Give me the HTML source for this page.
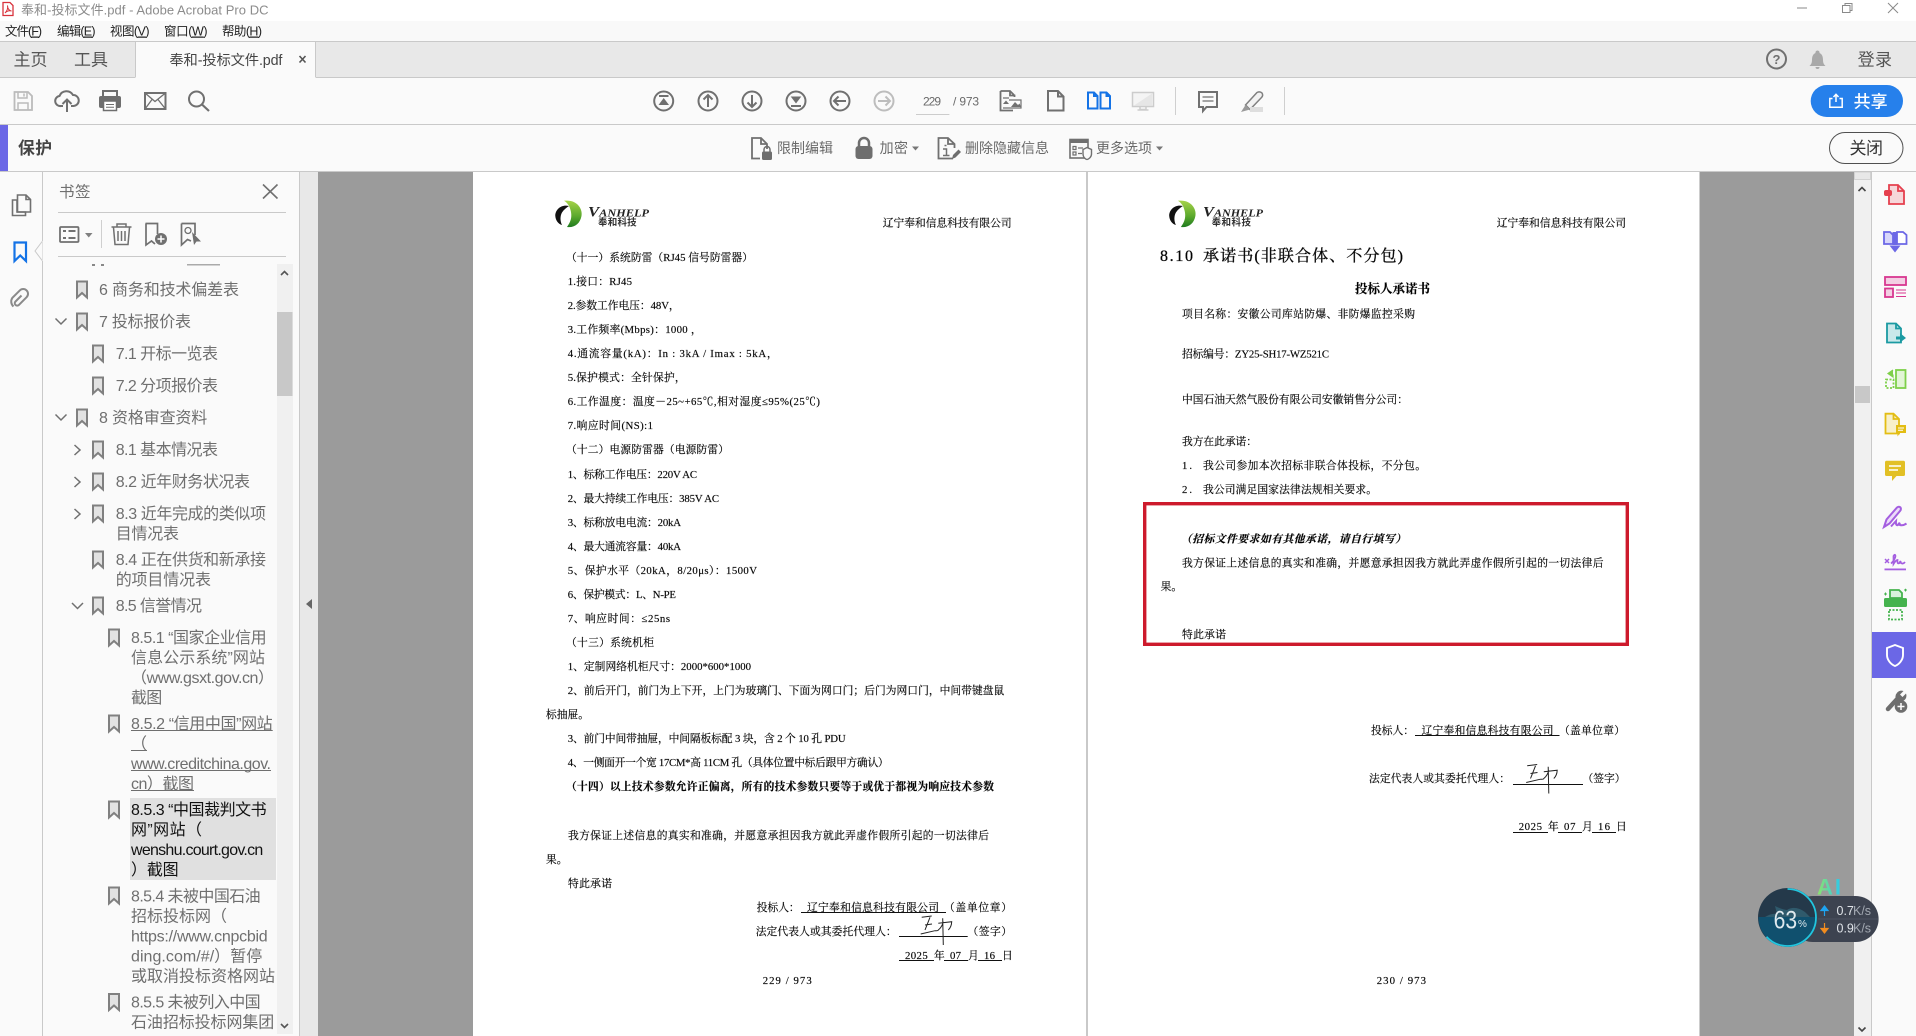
<!DOCTYPE html>
<html lang="zh-CN">
<head>
<meta charset="utf-8">
<title>奉和-投标文件.pdf - Adobe Acrobat Pro DC</title>
<style>
html,body{margin:0;padding:0;background:#fff;width:1916px;height:1036px;overflow:hidden}
svg{display:block}
.u{font-family:"Liberation Sans","Noto Sans CJK SC",sans-serif}
.p{font-family:"Liberation Serif","Noto Serif CJK SC",serif;font-size:10.75px;fill:#000;stroke:#222;stroke-width:.18}
.pb{font-weight:700}
.t{font-family:"Liberation Sans","Noto Sans CJK SC",sans-serif;font-size:16px;fill:#6f6f6f}
.i{fill:none;stroke:#707070;stroke-width:2}
.m{font-size:12.5px;fill:#222}
.tb{font-size:14px;fill:#6a6a6a}
</style>
</head>
<body>
<svg xmlns="http://www.w3.org/2000/svg" width="1916" height="1036" viewBox="0 0 1916 1036">
<defs>
<g id="bm"><path d="M1 1H11V17L6 12.5L1 17Z" fill="#e2e2e2" stroke="#808080" stroke-width="2"/></g>
<linearGradient id="lg" x1="0" y1="0" x2="0" y2="1"><stop offset="0" stop-color="#a6d24a"/><stop offset=".6" stop-color="#5aa82c"/><stop offset="1" stop-color="#1f7a1f"/></linearGradient>
<linearGradient id="ai" x1="0" y1="0" x2="1" y2="0"><stop offset="0" stop-color="#8fe36a"/><stop offset="1" stop-color="#2cc8ee"/></linearGradient>
<clipPath id="ccl"><circle cx="1787.5" cy="917.5" r="29"/></clipPath>
</defs>

<!-- title bar -->
<rect width="1916" height="21" fill="#fff"/>
<path d="M3 2.5H10L13 5.5V15.5H3Z" fill="#fff" stroke="#d8323c" stroke-width="1.3"/>
<path d="M5 13C7 11 8 8 7.5 5.5C7.5 8 9 11 11.5 11C9.5 10.5 7 11 5 13Z" fill="none" stroke="#d8323c"/>
<text class="u" x="21" y="14.5" font-size="13" fill="#8c8c8c" textLength="247.5">奉和-投标文件.pdf - Adobe Acrobat Pro DC</text>
<path d="M1797 8H1807" stroke="#8a8a8a" stroke-width="1"/>
<path d="M1845 5.5V3.5H1852V10.5H1850M1842.5 5.5H1850V12.5H1842.5Z" fill="none" stroke="#8a8a8a"/>
<path d="M1888 3L1898 13M1898 3L1888 13" stroke="#8a8a8a"/>

<!-- menu -->
<rect y="21" width="1916" height="20" fill="#f9f9f9"/>
<rect y="41" width="1916" height="1" fill="#c9c9c9"/>
<g class="u m">
<text x="5" y="35.5" textLength="37">文件(<tspan text-decoration="underline">F</tspan>)</text>
<text x="57" y="35.5" textLength="38.5">编辑(<tspan text-decoration="underline">E</tspan>)</text>
<text x="110" y="35.5" textLength="39.5">视图(<tspan text-decoration="underline">V</tspan>)</text>
<text x="164" y="35.5" textLength="43.5">窗口(<tspan text-decoration="underline">W</tspan>)</text>
<text x="222" y="35.5" textLength="40">帮助(<tspan text-decoration="underline">H</tspan>)</text>
</g>

<!-- tab bar -->
<rect y="42" width="1916" height="36" fill="#e8e8e8"/>
<rect y="77" width="1916" height="1" fill="#c9c9c9"/>
<rect x="135.5" y="42" width="180" height="36" fill="#fafafa"/>
<path d="M135.5 42V77M315.5 42V77" stroke="#c9c9c9"/>
<text class="u" x="13.5" y="65.5" font-size="17" fill="#555" textLength="34">主页</text>
<text class="u" x="74" y="65.5" font-size="17" fill="#555" textLength="34">工具</text>
<text class="u" x="169.4" y="65" font-size="14.3" fill="#444" textLength="113">奉和-投标文件.pdf</text>
<path d="M299.5 56L305.5 62.5M305.5 56L299.5 62.5" stroke="#555" stroke-width="1.6"/>
<circle cx="1776.5" cy="59" r="9.5" fill="none" stroke="#707070" stroke-width="2"/>
<text class="u" x="1776.5" y="64" font-size="13" font-weight="700" fill="#707070" text-anchor="middle">?</text>
<path d="M1817.5 50.5A2 2 0 0 1 1819.5 53C1822 54 1823 56.5 1823 60C1823 63 1824 64.5 1825.5 66H1809.5C1811 64.5 1812 63 1812 60C1812 56.5 1813 54 1815.5 53A2 2 0 0 1 1817.5 50.5ZM1815.5 67H1819.5A2 2 0 0 1 1815.5 67Z" fill="#a9a9a9"/>
<text class="u" x="1857.6" y="65.5" font-size="17" fill="#555" textLength="34.4">登录</text>

<!-- toolbar -->
<rect y="78" width="1916" height="46" fill="#fafafa"/>
<rect y="124" width="1916" height="1" fill="#c9c9c9"/>
<path d="M14.5 92H28L32 96V110H14.5Z" fill="none" stroke="#bbb" stroke-width="1.8"/>
<path d="M18 92V98H27V92M24 93.5V96.5M18 110V103H28V110" fill="none" stroke="#bbb" stroke-width="1.5"/>
<path d="M63 106H61A5 5 0 0 1 59.5 96A7.5 7.5 0 0 1 73 95A5.5 5.5 0 0 1 73.5 106H71" fill="none" stroke="#707070" stroke-width="2"/>
<path d="M67 112V100M62.5 104L67 99.5L71.5 104" fill="none" stroke="#707070" stroke-width="2"/>
<path d="M103 96V91H117V96" fill="none" stroke="#6e6e6e" stroke-width="2"/>
<rect x="99" y="96" width="22" height="12" rx="2" fill="#6e6e6e"/>
<rect x="103.5" y="101" width="13" height="9.5" fill="#fff" stroke="#6e6e6e" stroke-width="1.5"/>
<path d="M106 104.5H114M106 107.3H114" stroke="#6e6e6e"/>
<rect x="145" y="93" width="20.5" height="16" fill="none" stroke="#707070" stroke-width="2"/>
<path d="M145 93L155 101.5L165.5 93M145 109L152 99.5M165.5 109L158 99.5" fill="none" stroke="#707070" stroke-width="1.3"/>
<circle cx="196.5" cy="99" r="7.5" fill="none" stroke="#707070" stroke-width="2"/>
<path d="M202 104.5L209 111" stroke="#707070" stroke-width="2.2"/>

<!-- nav circles -->
<g class="i">
<circle cx="663.7" cy="101" r="9.5"/><circle cx="708" cy="101" r="9.5"/><circle cx="752" cy="101" r="9.5"/><circle cx="796" cy="101" r="9.5"/><circle cx="840" cy="101" r="9.5"/>
<circle cx="884" cy="101" r="9.5" stroke="#bdbdbd"/>
<path d="M659 96H668.5"/>
<path d="M708 107V95M703.5 99.5L708 95L712.5 99.5"/>
<path d="M752 95V107M747.5 102.5L752 107L756.5 102.5"/>
<path d="M791 106H801"/>
<path d="M846 101H834M838.5 96.5L834 101L838.5 105.5"/>
<path d="M878 101H890M885.5 96.5L890 101L885.5 105.5" stroke="#bdbdbd"/>
</g>
<path d="M663.7 98L669 105H658.5Z" fill="#707070"/>
<path d="M790.7 96.5H801.3L796 103.5Z" fill="#707070"/>
<text class="u" x="923" y="105.5" font-size="12" fill="#6a6a6a" textLength="18">229</text>
<rect x="916" y="114" width="33.4" height="1" fill="#ccc"/>
<text class="u" x="953" y="105.5" font-size="12" fill="#6a6a6a" textLength="26">/ 973</text>
<path d="M1000.5 91H1010L1014 95M1010 91V95.5H1014.5V97M1000.5 91V110.5H1013" fill="none" stroke="#707070" stroke-width="1.8"/>
<path d="M1003 98H1009M1003 108H1021V100H1009" fill="none" stroke="#707070" stroke-width="1.2"/>
<path d="M1011 107L1015 102L1018 105L1019.5 103.5L1021 107ZM1003 104L1006 100.5L1009 104Z" fill="#707070"/>
<path d="M1048 91H1058L1063.5 96.5V110.5H1048ZM1058 91V96.5H1063.5" class="i"/>
<path d="M1088 92.5H1094L1097.5 96V108.5H1088ZM1094 92.5V96H1097.5M1100.5 92.5H1106.5L1110 96V108.5H1100.5ZM1106.5 92.5V96H1110" fill="none" stroke="#1473e6" stroke-width="2"/>
<rect x="1132.5" y="92.5" width="21" height="14" fill="#f4f4f4" stroke="#ccc" stroke-width="1.5"/>
<path d="M1134 105.5L1152 93.5V105.5Z" fill="#e6e6e6"/>
<path d="M1140 107V109.5H1146V107M1137.5 110H1148.5" fill="none" stroke="#ccc" stroke-width="1.5"/>
<rect x="1175" y="87" width="1" height="28" fill="#cfcfcf"/>
<path d="M1199 92H1217V107H1206.5L1203 111V107H1199Z" class="i"/>
<path d="M1202.5 97H1213.5M1202.5 101H1213.5" stroke="#707070" stroke-width="1.3"/>
<path d="M1245.5 105L1257 92.5Q1260 91 1262 93Q1263.5 95.5 1261.5 97.5L1250 109.5Z" fill="#f2f2f2" stroke="#808080" stroke-width="1.5"/>
<path d="M1241 112L1245.5 105L1250 109.5Z" fill="#9a9a9a"/>
<rect x="1250" y="107" width="13" height="5" fill="#dedede"/>
<rect x="1284" y="87" width="1" height="28" fill="#cfcfcf"/>
<rect x="1810.7" y="85" width="92.3" height="32" rx="16" fill="#2680eb"/>
<path d="M1832.5 98.5H1829.8V107.3H1842.2V98.5H1839.5M1836 102V94.5M1833.5 97L1836 94.3L1838.5 97" fill="none" stroke="#fff" stroke-width="1.5"/>
<text class="u" x="1853.6" y="107.5" font-size="17" font-weight="500" fill="#fff" textLength="34">共享</text>

<!-- protect bar -->
<rect y="125" width="1916" height="46.5" fill="#fafafa"/>
<rect y="171" width="1916" height="1" fill="#c9c9c9"/>
<rect y="125" width="8" height="46" fill="#6b67e6"/>
<text class="u" x="18" y="154" font-size="16.8" font-weight="700" fill="#444" textLength="34">保护</text>

<path d="M760 158.5H752V138H761L767 144V149M761 138V144H767" fill="none" stroke="#707070" stroke-width="1.8"/>
<rect x="762" y="151.5" width="10" height="8.5" rx="1.5" fill="#6e6e6e"/>
<path d="M764 152V149.5A3 3 0 0 1 770 149.5V152" fill="none" stroke="#6e6e6e" stroke-width="1.5"/>
<text class="u tb" x="777" y="153" textLength="56">限制编辑</text>
<rect x="855.5" y="146" width="17" height="13" rx="3" fill="#6e6e6e"/>
<path d="M859 147V143A5 5 0 0 1 869 143V147" fill="none" stroke="#6e6e6e" stroke-width="2.5"/>
<text class="u tb" x="879.6" y="153" textLength="28.4">加密</text>
<path d="M912 146.5H919L915.5 150.5Z" fill="#777"/>
<path d="M953 158.5H938.5V138H948L954.5 144V148M948 138V144H954.5" fill="none" stroke="#707070" stroke-width="1.8"/>
<path d="M944.5 145.5H946.5M943 149H946.5V155M943 155.5H949.5" fill="none" stroke="#707070" stroke-width="1.5"/>
<path d="M952 159L953 155L958.5 149.5L961 152L955.5 157.5Z" fill="#6e6e6e"/>
<text class="u tb" x="965" y="153" textLength="84">删除隐藏信息</text>
<rect x="1070" y="139.5" width="18" height="18.5" fill="none" stroke="#707070" stroke-width="1.6"/>
<rect x="1070" y="139.5" width="18" height="3.5" fill="#707070"/>
<path d="M1073 146.5H1076V149.5H1073ZM1073 152H1076V155H1073ZM1078 148H1083M1078 153.5H1082" fill="none" stroke="#707070" stroke-width="1.2"/>
<path d="M1087 147.5L1091.5 149.5V154C1091.5 157 1089 159 1087 159.5C1085 159 1083 157 1083 154V149.5Z" fill="#fafafa" stroke="#707070" stroke-width="1.4"/>
<text class="u tb" x="1096" y="153" textLength="56">更多选项</text>
<path d="M1156 146.5H1163L1159.5 150.5Z" fill="#777"/>
<rect x="1829.5" y="132.5" width="73.5" height="31" rx="15.5" fill="#fafafa" stroke="#505050" stroke-width="1"/>
<text class="u" x="1849.5" y="154" font-size="17" fill="#333" textLength="33.5">关闭</text>

<!-- left rail + panel -->
<rect y="172" width="300" height="864" fill="#fafafa"/>
<rect x="42" y="172" width="1" height="864" fill="#c9c9c9"/>
<path d="M42.5 241L35 251L42.5 261Z" fill="#fafafa" stroke="#c9c9c9"/>
<rect x="42.5" y="241" width="2" height="20" fill="#fafafa"/>
<path d="M12.5 200H17V212H25.5V215.5H12.5Z" fill="none" stroke="#707070" stroke-width="1.6"/>
<path d="M17.5 195H26L30.5 199.5V212H17.5ZM26 195V199.5H30.5" fill="none" stroke="#707070" stroke-width="1.6"/>
<path d="M14.5 242.5H26V261L20.25 255.5L14.5 261Z" fill="none" stroke="#1473e6" stroke-width="2.2"/>
<path d="M21.5 295.5L15.5 301.5A2.4 2.4 0 0 0 18.9 304.9L26.6 297.2A4.8 4.8 0 0 0 19.8 290.4L12.3 297.9A6.6 6.6 0 0 0 13.5 306.5" fill="none" stroke="#8a8a8a" stroke-width="2"/>
<text class="u" x="59" y="197" font-size="15.5" fill="#707070" textLength="31.5">书签</text>
<path d="M263 184.5L277.5 198.5M277.5 184.5L263 198.5" stroke="#707070" stroke-width="1.6"/>
<rect x="58" y="212" width="228" height="1" fill="#c9c9c9"/>
<rect x="58" y="256" width="228" height="1" fill="#c9c9c9"/>
<rect x="60" y="227" width="18.5" height="15" rx="1" fill="none" stroke="#707070" stroke-width="1.8"/>
<path d="M63 231H66M63 238H66M68.5 231H75.5M68.5 238H75.5" stroke="#707070" stroke-width="2"/>
<path d="M85 233H92.5L88.75 237.5Z" fill="#808080"/>
<rect x="101" y="220" width="1" height="28" fill="#cfcfcf"/>
<path d="M111.5 227H131.5M117 227V224H126V227M113.5 227.5L115 244.5H128L129.5 227.5M118 231V241M121.5 231V241M125 231V241" fill="none" stroke="#707070" stroke-width="1.5"/>
<path d="M145.5 223.5H157.5V234M155 244L151.5 241L146 245V223.5" fill="none" stroke="#707070" stroke-width="1.7"/>
<circle cx="161" cy="239" r="6" fill="#707070"/><path d="M157.5 239H164.5M161 235.5V242.5" stroke="#fff" stroke-width="1.5"/>
<path d="M181.5 223.5H195V235M191 241L187.5 239.5L181.5 245V223.5" fill="none" stroke="#707070" stroke-width="1.7"/>
<circle cx="188" cy="230.5" r="3" fill="none" stroke="#707070" stroke-width="1.3"/>
<path d="M192 232L201 241.5L196.5 241.5L194 245Z" fill="#707070"/>

<!-- bookmark scrollbar + strip -->
<rect x="277" y="264" width="16" height="770" fill="#f0f0f0"/>
<rect x="277" y="312" width="15.5" height="84" fill="#c8c8c8"/>
<path d="M281 275L284.5 271.5L288 275" fill="none" stroke="#555" stroke-width="1.6"/>
<path d="M281 1024L284.5 1027.5L288 1024" fill="none" stroke="#555" stroke-width="1.6"/>
<rect x="299" y="172" width="1" height="864" fill="#c9c9c9"/>
<rect x="300" y="172" width="18" height="864" fill="#e8e8e8"/>
<path d="M312 599V609L306 604Z" fill="#666"/>

<!-- bookmarks -->
<rect x="92" y="264" width="3" height="2" fill="#888"/><rect x="101" y="264" width="3" height="2" fill="#888"/>
<rect x="187" y="264" width="33" height="1.5" fill="#aaa"/>
<use href="#bm" x="76" y="280.5"/><text class="t" x="99" y="295" textLength="140">6 商务和技术偏差表</text>
<use href="#bm" x="76" y="312.5"/><text class="t" x="99" y="327" textLength="92">7 投标报价表</text>
<use href="#bm" x="92" y="344.5"/><text class="t" x="115.7" y="359" textLength="102.3">7.1 开标一览表</text>
<use href="#bm" x="92" y="376.5"/><text class="t" x="115.7" y="391" textLength="102.3">7.2 分项报价表</text>
<use href="#bm" x="76" y="408.5"/><text class="t" x="99" y="423" textLength="108.3">8 资格审查资料</text>
<use href="#bm" x="92" y="440.5"/><text class="t" x="115.7" y="455" textLength="102.3">8.1 基本情况表</text>
<use href="#bm" x="92" y="472.5"/><text class="t" x="115.7" y="487" textLength="134.3">8.2 近年财务状况表</text>
<use href="#bm" x="92" y="504.5"/><text class="t" x="115.7" y="519" textLength="150.3">8.3 近年完成的类似项</text><text class="t" x="115.7" y="539" textLength="63.3">目情况表</text>
<use href="#bm" x="92" y="550.5"/><text class="t" x="115.7" y="565" textLength="150.3">8.4 正在供货和新承接</text><text class="t" x="115.7" y="585" textLength="95.3">的项目情况表</text>
<use href="#bm" x="92" y="596.5"/><text class="t" x="115.7" y="611" textLength="86.3">8.5 信誉情况</text>
<use href="#bm" x="108" y="628.5"/><text class="t" x="131" y="643" textLength="135.7">8.5.1 “国家企业信用</text>
<text class="t" x="131" y="663" textLength="134">信息公示系统”网站</text>
<text class="t" x="131" y="683" textLength="143">（www.gsxt.gov.cn）</text>
<text class="t" x="131" y="703" textLength="31.3">截图</text>
<use href="#bm" x="108" y="714.5"/><text class="t" x="131" y="729" textLength="141.7">8.5.2 “信用中国”网站</text>
<text class="t" x="131" y="749">（</text>
<text class="t" x="131" y="769" textLength="140">www.creditchina.gov.</text>
<text class="t" x="131" y="789" textLength="63">cn）截图</text>
<rect x="131" y="730" width="141.7" height="1" fill="#6f6f6f"/><rect x="131" y="750" width="16" height="1" fill="#6f6f6f"/><rect x="131" y="770" width="140" height="1" fill="#6f6f6f"/><rect x="131" y="790" width="63" height="1" fill="#6f6f6f"/>
<rect x="130" y="798" width="146" height="82" fill="#e0e0e0"/>
<use href="#bm" x="108" y="800.5"/><text class="t" style="fill:#111" x="131" y="815" textLength="135.7">8.5.3 “中国裁判文书</text>
<text class="t" style="fill:#111" x="131" y="835" textLength="71">网”网站（</text>
<text class="t" style="fill:#111" x="131" y="855" textLength="132.3">wenshu.court.gov.cn</text>
<text class="t" style="fill:#111" x="131" y="875" textLength="47.7">）截图</text>
<use href="#bm" x="108" y="886.5"/><text class="t" x="131" y="901.5" textLength="129.7">8.5.4 未被中国石油</text>
<text class="t" x="131" y="921.5" textLength="96">招标投标网（</text>
<text class="t" x="131" y="941.5" textLength="136.7">https://www.cnpcbid</text>
<text class="t" x="131" y="961.5" textLength="131.3">ding.com/#/）暂停</text>
<text class="t" x="131" y="981.5" textLength="144">或取消投标资格网站</text>
<use href="#bm" x="108" y="993"/><text class="t" x="131" y="1007.5" textLength="129.7">8.5.5 未被列入中国</text>
<text class="t" x="131" y="1027.5" textLength="143.3">石油招标投标网集团</text>
<g fill="none" stroke="#707070" stroke-width="1.5">
<path d="M55.5 318.5L61 324L66.5 318.5M55.5 414.5L61 420L66.5 414.5M72 603L77.5 608.5L83 603"/>
<path d="M74.5 445L80 450L74.5 455M74.5 477L80 482L74.5 487M74.5 509L80 514L74.5 519"/>
</g>

<!-- document area -->
<rect x="318" y="172" width="1536" height="864" fill="#9b9b9b"/>
<rect x="473" y="172" width="613" height="864" fill="#fff"/>
<rect x="1086" y="172" width="2" height="864" fill="#c9c9c9"/>
<rect x="1088" y="172" width="611.5" height="864" fill="#fff"/>

<!-- doc scrollbar -->
<rect x="1854" y="172" width="17" height="864" fill="#f0f0f0"/>
<rect x="1854.5" y="172" width="16" height="7.5" fill="#e8e8e8" stroke="#c0c0c0" stroke-width=".6"/>
<rect x="1855" y="386" width="15" height="17" fill="#c8c8c8"/>
<path d="M1858.5 191L1862 187.5L1865.5 191M1858.5 1027.5L1862 1031L1865.5 1027.5" fill="none" stroke="#444" stroke-width="1.6"/>
<rect x="1871" y="172" width="1" height="864" fill="#c9c9c9"/>
<rect x="1872" y="172" width="44" height="864" fill="#fafafa"/>

<!-- LEFT PAGE -->
<path d="M564 200.8C576 199 583 208 581.5 216C580 224 574 228 567 227C570.5 222 572 218 571 212C570 207 568 203 564 200.8Z" fill="url(#lg)"/>
<path d="M569 206C561 204 555 210 555.3 216C555.6 220 558 224 562 225C560 221 560 216 562 212.5C564 209.5 566.5 207.5 569 206Z" fill="#111"/>
<text x="588" y="216.5" font-family="Liberation Serif,serif" font-weight="700" font-style="italic" fill="#222" font-size="11" textLength="61" lengthAdjust="spacingAndGlyphs"><tspan font-size="15">V</tspan>ANHELP</text>
<text x="598" y="225.5" font-family="Liberation Sans,Noto Sans CJK SC,sans-serif" font-size="9.5" font-weight="700" fill="#333" textLength="38.7">奉和科技</text>
<g class="p">
<text x="882.7" y="226.7" textLength="129">辽宁奉和信息科技有限公司</text>
<text x="566" y="261" textLength="187">（十一）系统防雷（RJ45 信号防雷器）</text>
<text x="567.7" y="285" textLength="64.3">1.接口：RJ45</text>
<text x="567.7" y="309" textLength="112">2.参数工作电压：48V，</text>
<text x="567.7" y="333" textLength="134">3.工作频率(Mbps)：1000 ，</text>
<text x="567.7" y="357" textLength="210">4.通流容量(kA)：In : 3kA / Imax : 5kA，</text>
<text x="567.7" y="381" textLength="118">5.保护模式：全针保护，</text>
<text x="567.7" y="405" textLength="252.3">6.工作温度：温度－25~+65℃,相对湿度≤95%(25℃)</text>
<text x="567.7" y="429" textLength="85.3">7.响应时间(NS):1</text>
<text x="566" y="453" textLength="163">（十二）电源防雷器（电源防雷）</text>
<text x="567.7" y="478" textLength="129.3">1、标称工作电压：220V AC</text>
<text x="567.7" y="502" textLength="151.3">2、最大持续工作电压：385V AC</text>
<text x="567.7" y="526" textLength="113.3">3、标称放电电流：20kA</text>
<text x="567.7" y="550" textLength="113.3">4、最大通流容量：40kA</text>
<text x="567.7" y="574" textLength="189.3">5、保护水平（20kA，8/20μs）：1500V</text>
<text x="567.7" y="598" textLength="108.3">6、保护模式：L、N-PE</text>
<text x="567.7" y="622" textLength="102.3">7、响应时间：≤25ns</text>
<text x="566" y="646" textLength="88">（十三）系统机柜</text>
<text x="567.7" y="670" textLength="183.3">1、定制网络机柜尺寸：2000*600*1000</text>
<text x="567.7" y="694" textLength="436.6">2、前后开门，前门为上下开，上门为玻璃门、下面为网口门；后门为网口门，中间带键盘鼠</text>
<text x="546" y="718" textLength="43">标抽屉。</text>
<text x="567.7" y="742" textLength="278">3、前门中间带抽屉，中间隔板标配 3 块，含 2 个 10 孔 PDU</text>
<text x="567.7" y="766" textLength="321">4、一侧面开一个宽 17CM*高 11CM 孔（具体位置中标后跟甲方确认）</text>
<text class="pb" x="566" y="790" textLength="428">（十四）以上技术参数允许正偏离，所有的技术参数只要等于或优于都视为响应技术参数</text>
<text x="568" y="839" textLength="421">我方保证上述信息的真实和准确，并愿意承担因我方就此弄虚作假所引起的一切法律后</text>
<text x="546" y="863" textLength="21.5">果。</text>
<text x="568" y="887" textLength="44">特此承诺</text>
<text x="756.7" y="911" textLength="43">投标人：</text>
<text x="807" y="911" textLength="132">辽宁奉和信息科技有限公司</text>
<text x="944" y="911" textLength="68">（盖单位章）</text>
<text x="755.7" y="935" textLength="141">法定代表人或其委托代理人：</text>
<text x="967.5" y="935" textLength="44.5">（签字）</text>
<text x="905" y="959" textLength="22.7">2025</text>
<text x="934" y="959" textLength="10.7">年</text>
<text x="950" y="959" textLength="11">07</text>
<text x="968" y="959" textLength="10.7">月</text>
<text x="984" y="959" textLength="11">16</text>
<text x="1002" y="959" textLength="10.7">日</text>
<text x="762.7" y="984" textLength="49">229 / 973</text>
</g>
<path d="M801 912.500H946M899 936.500H967.700M899 960.500H934M944 960.500H968M978 960.500H1002" stroke="#111" stroke-width="1"/>
<g fill="none" stroke="#222" stroke-width="1">
<path d="M921.7 917.3L931.7 916M930 917.3Q927 925 925 930M920.7 934L935 930.7M925 925L932 924"/>
<path d="M935 930.7Q938 931 938.3 930Q942 927 943.3 921.7M942.7 918.3L943.3 945M938.3 923.3L951.7 921.7Q951.5 927 948.3 930"/>
</g>

<!-- RIGHT PAGE -->
<g transform="translate(613.9 0)">
<path d="M564 200.8C576 199 583 208 581.5 216C580 224 574 228 567 227C570.5 222 572 218 571 212C570 207 568 203 564 200.8Z" fill="url(#lg)"/>
<path d="M569 206C561 204 555 210 555.3 216C555.6 220 558 224 562 225C560 221 560 216 562 212.5C564 209.5 566.5 207.5 569 206Z" fill="#111"/>
</g>
<text x="1203" y="216.5" font-family="Liberation Serif,serif" font-weight="700" font-style="italic" fill="#222" font-size="11" textLength="60" lengthAdjust="spacingAndGlyphs"><tspan font-size="15">V</tspan>ANHELP</text>
<text x="1211.6" y="225.5" font-family="Liberation Sans,Noto Sans CJK SC,sans-serif" font-size="9.5" font-weight="700" fill="#333" textLength="39.4">奉和科技</text>
<g class="p">
<text x="1496.7" y="226.7" textLength="129.3">辽宁奉和信息科技有限公司</text>
<text x="1160" y="261" style="font-size:16px;stroke-width:.35" textLength="33">8.10</text>
<text x="1203" y="261" style="font-size:16px;stroke-width:.35" textLength="200">承诺书(非联合体、不分包)</text>
<text class="pb" x="1355" y="293" style="font-size:12.5px" textLength="75">投标人承诺书</text>
<text x="1182" y="317.3" textLength="233">项目名称：安徽公司库站防爆、非防爆监控采购</text>
<text x="1182" y="357.3" textLength="147">招标编号：ZY25-SH17-WZ521C</text>
<text x="1182" y="403" textLength="226">中国石油天然气股份有限公司安徽销售分公司：</text>
<text x="1182" y="445" textLength="75">我方在此承诺：</text>
<text x="1182" y="469" textLength="10">1.</text>
<text x="1203" y="469" textLength="223">我公司参加本次招标非联合体投标，不分包。</text>
<text x="1182" y="493" textLength="10">2.</text>
<text x="1203" y="493" textLength="174">我公司满足国家法律法规相关要求。</text>
<text class="pb" x="1181" y="542.3" font-style="italic" textLength="225">（招标文件要求如有其他承诺，请自行填写）</text>
<text x="1182" y="566.3" textLength="421.5">我方保证上述信息的真实和准确，并愿意承担因我方就此弄虚作假所引起的一切法律后</text>
<text x="1160.6" y="590" textLength="21.5">果。</text>
<text x="1182" y="638" textLength="44">特此承诺</text>
<text x="1371" y="734" textLength="43">投标人：</text>
<text x="1421.5" y="734" textLength="132">辽宁奉和信息科技有限公司</text>
<text x="1559" y="734" textLength="66">（盖单位章）</text>
<text x="1369" y="782" textLength="141">法定代表人或其委托代理人：</text>
<text x="1582.5" y="782" textLength="43">（签字）</text>
<text x="1518.7" y="830" textLength="23.3">2025</text>
<text x="1548" y="830" textLength="10.7">年</text>
<text x="1564" y="830" textLength="11.5">07</text>
<text x="1582" y="830" textLength="10.7">月</text>
<text x="1598" y="830" textLength="12">16</text>
<text x="1616" y="830" textLength="10.7">日</text>
<text x="1376.7" y="984" textLength="49.3">230 / 973</text>
</g>
<path d="M1415 735.500H1559.500M1513 784.500H1583M1513 832.500H1548M1558 832.500H1582M1592 832.500H1616" stroke="#111" stroke-width="1"/>
<g fill="none" stroke="#222" stroke-width="1" transform="translate(605.5 -151.5)">
<path d="M921.7 917.3L931.7 916M930 917.3Q927 925 925 930M920.7 934L935 930.7M925 925L932 924"/>
<path d="M935 930.7Q938 931 938.3 930Q942 927 943.3 921.7M942.7 918.3L943.3 945M938.3 923.3L951.7 921.7Q951.5 927 948.3 930"/>
</g>
<rect x="1144.7" y="503.7" width="482.6" height="140.6" fill="none" stroke="#cd1a2c" stroke-width="3.4"/>

<!-- right rail icons -->
<g transform="translate(0 1)">
<path d="M1889 184H1898L1904 190V203H1889Z" fill="#f6d6d9" stroke="#e5404e" stroke-width="1.8"/>
<path d="M1898 184V190H1904" fill="none" stroke="#e5404e" stroke-width="1.8"/>
<rect x="1884" y="189" width="8" height="6" rx="2" fill="#e5404e"/>
</g>
<g transform="translate(0 4)">
<path d="M1884 228H1890L1893 231V240H1884Z" fill="#d7d6fa" stroke="#6b67e6" stroke-width="1.8"/>
<path d="M1897 228H1903L1906.500 231V240H1897Z" fill="#fff" stroke="#6b67e6" stroke-width="1.8"/>
<path d="M1892.500 228V242H1897.500V228ZM1889.500 241.500H1900.500L1895 248.500Z" fill="#6b67e6"/>
</g>
<g transform="translate(0 7)">
<rect x="1885" y="270" width="21" height="8" fill="#f3cfe3" stroke="#d83790" stroke-width="1.8"/>
<rect x="1885" y="281.500" width="8" height="8.500" fill="#f3cfe3" stroke="#d83790" stroke-width="1.800"/>
<path d="M1896 283H1906M1896 286H1906M1896 289.500H1906" stroke="#d83790"/>
</g>
<g transform="translate(0 10)">
<path d="M1887 313.500H1896L1901 318.500V332.500H1887Z" fill="#c9e8ea" stroke="#1b9aa2" stroke-width="1.800"/>
<path d="M1896 313.500V318.500H1901" fill="none" stroke="#1b9aa2" stroke-width="1.800"/>
<path d="M1896 326.500H1900V323L1906 328L1900 332.500V329.500H1896Z" fill="#1b9aa2"/>
</g>
<g transform="translate(0 13)">
<rect x="1896" y="357" width="9.500" height="18" fill="#e2f5d6" stroke="#7ed04a" stroke-width="1.800"/>
<rect x="1886" y="366.500" width="7.500" height="8.500" fill="none" stroke="#7ed04a" stroke-width="1.800" stroke-dasharray="2 1.500"/>
<path d="M1893 357L1888 360.500L1893 364V361.500M1888 360.500H1893" fill="#7ed04a" stroke="#7ed04a" stroke-width="1.200"/>
</g>
<g transform="translate(0 16)">
<path d="M1885.500 397.700H1893.500L1899 403V417.500H1885.500Z" fill="#f8f0c8" stroke="#e3bd13" stroke-width="1.800"/>
<path d="M1893.500 397.700V403H1899" fill="none" stroke="#e3bd13" stroke-width="1.800"/>
<path d="M1896 409H1906V417H1900L1897.500 420.500V417H1896Z" fill="#e3bd13"/>
<path d="M1898 412H1904M1898 414.300H1903" stroke="#fff"/>
</g>
<g transform="translate(0 19)">
<path d="M1886.500 441.700H1903.500Q1905 441.700 1905 443.500V455.500Q1905 457 1903.500 457H1896.500L1892 462V457H1886.500Q1885 457 1885 455.500V443.500Q1885 441.700 1886.500 441.700Z" fill="#e2c025"/>
<path d="M1889 447H1901M1889 451H1898" stroke="#fff" stroke-width="1.500"/>
</g>
<g transform="translate(0 22)">
<path d="M1884 505L1886.500 497.500L1897 485.500Q1899 484 1900.500 485.500Q1901.500 487.500 1900 489L1889.500 501.500Z" fill="#ecdcfa" stroke="#a45ee0" stroke-width="2"/>
<path d="M1891 504.500L1896 499Q1895.500 504 1898 503Q1899.500 499.500 1900 503Q1903 504 1906.500 501.500" fill="none" stroke="#a45ee0" stroke-width="2"/>
</g>
<g transform="translate(0 26)">
<path d="M1885 533L1889 537M1889 533L1885 537" stroke="#a45ee0" stroke-width="1.500"/>
<path d="M1891 537.500Q1895 534 1895.500 530Q1895 527.500 1893.500 530L1893.500 538Q1896 534 1897.500 534Q1897 538.500 1899.500 537Q1900.500 534 1901 537Q1903 538.500 1905 536" fill="none" stroke="#a45ee0" stroke-width="1.700"/>
<rect x="1884.500" y="542.500" width="21.500" height="1.800" fill="#a45ee0"/>
</g>
<g transform="translate(0 28)">
<path d="M1890 570V562H1899L1902 565V570Z" fill="#d9f1dc" stroke="#45b34e" stroke-width="1.800"/>
<rect x="1884" y="570" width="23" height="9" rx="1.500" fill="#45b34e"/>
<path d="M1889 582H1902V591.500H1889Z" fill="none" stroke="#45b34e" stroke-width="1.800" stroke-dasharray="2 1.500"/>
<path d="M1884 566H1887M1885.500 564.500V567.500M1904 562H1907M1905.500 560.700V563.500" stroke="#45b34e"/>
</g>
<rect x="1872" y="632" width="44" height="46" fill="#6b67e6"/>
<path d="M1895 645L1903 648V655C1903 660 1899 664.500 1895 666C1891 664.500 1887 660 1887 655V648Z" fill="none" stroke="#fff" stroke-width="1.900"/>
<g transform="translate(0 35)">
<path d="M1888 674L1899 662" stroke="#6e6e6e" stroke-width="4.500" stroke-linecap="round"/>
<path d="M1896 664A6 6 0 0 1 1903.500 656L1900 659.500L1902.500 662L1906 658.500A6 6 0 0 1 1899 666.500Z" fill="#6e6e6e"/>
<circle cx="1901" cy="671.500" r="6.300" fill="#6e6e6e"/><path d="M1897.500 671.500H1904.500M1901 668V675" stroke="#fff" stroke-width="1.500"/>
</g>

<!-- net widget -->
<rect x="1790" y="896" width="88.600" height="46" rx="23" fill="#3d4350"/>
<path d="M1818 919H1878" stroke="#4b5260"/>
<circle cx="1787.500" cy="917.500" r="29.500" fill="#24394a"/>
<g clip-path="url(#ccl)">
<rect x="1758" y="917" width="60" height="31" fill="#10506e"/>
<path d="M1765 917Q1772 913 1777 914L1775 906Q1783 910 1787 910Q1795 905 1805 912L1810 917Z" fill="#2f5a6c"/>
</g>
<circle cx="1787.500" cy="917.500" r="28.500" fill="none" stroke="#22c6df" stroke-width="1.800" stroke-dasharray="113 200" transform="rotate(-90 1787.500 917.500)"/>
<text class="u" x="1773.600" y="928.500" font-size="25" fill="#dfe9ee" textLength="23.500" lengthAdjust="spacingAndGlyphs">63</text>
<text class="u" x="1798" y="927" font-size="10" fill="#dfe8ec" textLength="9">%</text>
<text x="1817" y="894.500" font-family="Liberation Sans,sans-serif" font-size="22" font-weight="700" fill="url(#ai)" textLength="24">AI</text>
<path d="M1824.500 916V908M1821 910.500L1824.500 906L1828 910.500Z" fill="#1ea4f2" stroke="#1ea4f2" stroke-width="1.200"/>
<path d="M1824.500 923V931M1821 928.500L1824.500 933L1828 928.500Z" fill="#f28c1e" stroke="#f28c1e" stroke-width="1.200"/>
<text class="u" x="1836.500" y="915" font-size="12.500" fill="#dfe3e8">0.7</text><text class="u" x="1853" y="915" font-size="12.500" fill="#a3a9b2">K/s</text>
<text class="u" x="1836.500" y="932.500" font-size="12.500" fill="#dfe3e8">0.9</text><text class="u" x="1853" y="932.500" font-size="12.500" fill="#a3a9b2">K/s</text>
</svg>
</body>
</html>
